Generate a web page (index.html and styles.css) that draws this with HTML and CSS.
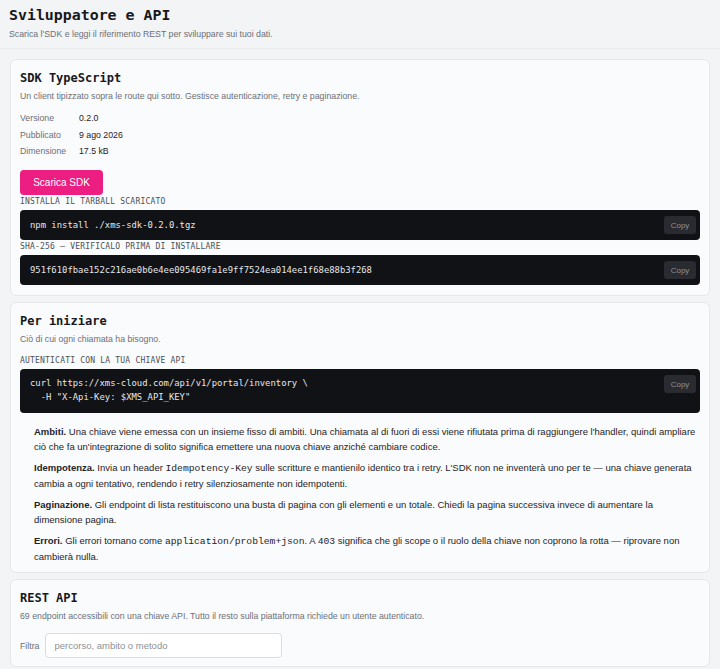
FILE: index.html
```html
<!DOCTYPE html>
<html lang="it">
<head>
<meta charset="utf-8">
<title>Sviluppatore e API</title>
<link rel="stylesheet" href="styles.css">
</head>
<body>
<header class="page-head">
  <h1 class="page-title">Sviluppatore e API</h1>
  <p class="page-sub">Scarica l'SDK e leggi il riferimento REST per sviluppare sui tuoi dati.</p>
</header>

<section class="card">
  <h2 class="card-title">SDK TypeScript</h2>
  <p class="muted">Un client tipizzato sopra le route qui sotto. Gestisce autenticazione, retry e paginazione.</p>
  <dl class="meta">
    <dt>Versione</dt><dd>0.2.0</dd>
    <dt>Pubblicato</dt><dd>9 ago 2026</dd>
    <dt>Dimensione</dt><dd>17.5 kB</dd>
  </dl>
  <button class="btn-primary" type="button">Scarica SDK</button>
  <div class="label">INSTALLA IL TARBALL SCARICATO</div>
  <div class="code"><pre>npm install ./xms-sdk-0.2.0.tgz</pre><button class="copy" type="button">Copy</button></div>
  <div class="label">SHA-256 — VERIFICALO PRIMA DI INSTALLARE</div>
  <div class="code"><pre>951f610fbae152c216ae0b6e4ee095469fa1e9ff7524ea014ee1f68e88b3f268</pre><button class="copy" type="button">Copy</button></div>
</section>

<section class="card">
  <h2 class="card-title">Per iniziare</h2>
  <p class="muted">Ciò di cui ogni chiamata ha bisogno.</p>
  <div class="label label-gap">AUTENTICATI CON LA TUA CHIAVE API</div>
  <div class="code code-tall"><pre>curl https://xms-cloud.com/api/v1/portal/inventory \
  -H "X-Api-Key: $XMS_API_KEY"</pre><button class="copy" type="button">Copy</button></div>
  <div class="notes">
    <p><strong>Ambiti.</strong> Una chiave viene emessa con un insieme fisso di ambiti. Una chiamata al di fuori di essi viene rifiutata prima di raggiungere l'handler, quindi ampliare ciò che fa un'integrazione di solito significa emettere una nuova chiave anziché cambiare codice.</p>
    <p><strong>Idempotenza.</strong> Invia un header <code>Idempotency-Key</code> sulle scritture e mantienilo identico tra i retry. L'SDK non ne inventerà uno per te — una chiave generata cambia a ogni tentativo, rendendo i retry silenziosamente non idempotenti.</p>
    <p><strong>Paginazione.</strong> Gli endpoint di lista restituiscono una busta di pagina con gli elementi e un totale. Chiedi la pagina successiva invece di aumentare la dimensione pagina.</p>
    <p><strong>Errori.</strong> Gli errori tornano come <code>application/problem+json</code>. A <code>403</code> significa che gli scope o il ruolo della chiave non coprono la rotta — riprovare non cambierà nulla.</p>
  </div>
</section>

<section class="card">
  <h2 class="card-title">REST API</h2>
  <p class="muted">69 endpoint accessibili con una chiave API. Tutto il resto sulla piattaforma richiede un utente autenticato.</p>
  <label class="filter"><span>Filtra</span><input type="text" placeholder="percorso, ambito o metodo"></label>
</section>
</body>
</html>
```
FILE: styles.css
```css
* { box-sizing: border-box; }
html, body { margin: 0; }
body {
  background: #f3f4f6;
  font-family: "Liberation Sans", Arial, sans-serif;
  color: #1f2328;
  padding: 0 10px 20px 10px;
  font-size: 10px;
}
.page-head {
  padding: 6px 0 8px 9px;
  margin: 0 -10px;
  border-bottom: 1px solid #eaebee;
}
.page-title {
  margin: 0;
  font-family: "DejaVu Sans Mono", monospace;
  font-weight: bold;
  font-size: 14.9px;
  line-height: 18px;
  color: #17181c;
}
.page-sub {
  margin: 4px 0 0 0;
  font-size: 8.75px;
  line-height: 12px;
  color: #6b7078;
}
.card {
  background: #fafbfc;
  border: 1px solid #e5e7eb;
  border-radius: 6px;
  margin-top: 10px;
  padding: 10px 9px 8px 9px;
}
.card + .card { margin-top: 6px; }
.card-title {
  margin: 0;
  font-family: "DejaVu Sans Mono", monospace;
  font-weight: bold;
  font-size: 12px;
  line-height: 16px;
  color: #17181c;
}
.muted {
  margin: 4px 0 0 0;
  color: #6b7078;
  font-size: 8.75px;
  line-height: 12px;
}
.meta {
  display: grid;
  grid-template-columns: 59px auto;
  row-gap: 4.5px;
  margin: 10px 0 0 0;
  font-size: 8.75px;
  line-height: 12px;
}
.meta dt { color: #6b7078; }
.meta dd { margin: 0; color: #1f2328; }
.btn-primary {
  margin: 13px 0 2px 0;
  display: block;
  background: #ec1e82;
  color: #fff;
  border: 0;
  border-radius: 4px;
  height: 25px;
  width: 83px;
  padding: 0;
  font-family: "Liberation Sans", Arial, sans-serif;
  font-size: 10px;
}
.label {
  font-family: "DejaVu Sans Mono", monospace;
  font-size: 8px;
  letter-spacing: 0.2px;
  color: #4b5058;
  line-height: 10px;
  margin-top: 1px;
}
.label-gap { margin-top: 11px; }
.code {
  background: #111216;
  border-radius: 4px;
  margin: 3px 0 2px 0;
  height: 30px;
  display: flex;
  align-items: center;
  justify-content: space-between;
  padding: 0 4px 0 10px;
}
.code pre {
  margin: 0;
  font-family: "DejaVu Sans Mono", monospace;
  font-size: 8.9px;
  line-height: 14px;
  color: #e6e7ea;
}
.code-tall {
  height: 44px;
  align-items: flex-start;
  padding-top: 7px;
}
.code-tall .copy { margin-top: -1px; }
.copy {
  background: #2a2b30;
  color: #8d9096;
  border: 0;
  border-radius: 3px;
  font-family: "Liberation Sans", Arial, sans-serif;
  font-size: 8px;
  height: 18px;
  width: 32px;
  padding: 0;
}
.notes {
  padding: 9px 0 0 14px;
}
.notes p {
  margin: 0 0 6px 0;
  font-size: 9.5px;
  line-height: 15px;
  color: #1f2328;
}
.notes p:last-child { margin-bottom: 0; }
.notes code {
  font-family: "Liberation Mono", monospace;
  font-size: 9.7px;
}
.filter {
  display: flex;
  align-items: center;
  gap: 6px;
  margin-top: 11px;
  font-size: 8.75px;
  color: #6b7078;
}
.filter input {
  width: 237px;
  height: 25px;
  border: 1px solid #d9dce1;
  border-radius: 4px;
  background: #fff;
  padding: 0 8px;
  font-family: "Liberation Sans", Arial, sans-serif;
  font-size: 9.5px;
  color: #1f2328;
}
.filter input::placeholder { color: #8d9096; }
```
